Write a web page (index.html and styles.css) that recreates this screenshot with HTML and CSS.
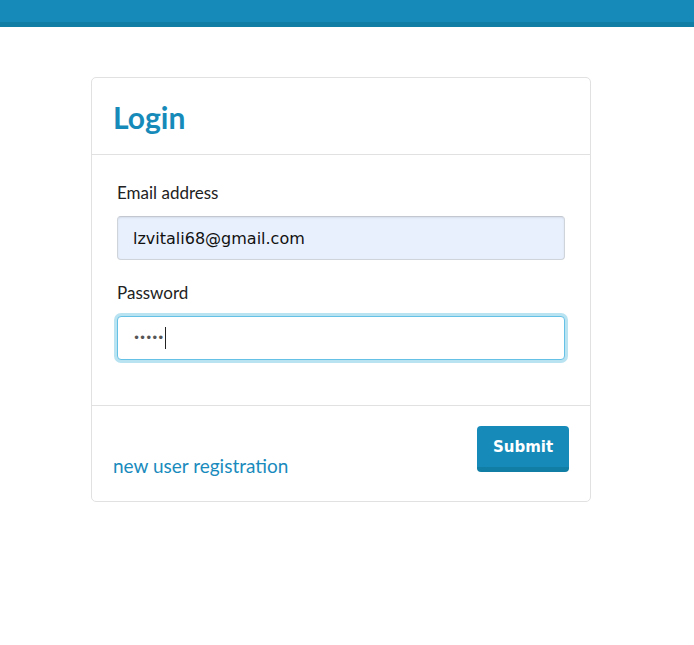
FILE: index.html
```html
<!DOCTYPE html>
<html>
<head>
<meta charset="utf-8">
<link rel="stylesheet" href="styles.css">
</head>
<body>
<div class="topbar"></div>
<main class="page">
  <div class="card">
    <div class="card-header"><h1>Login</h1></div>
    <div class="card-body">
      <label class="label">Email address</label>
      <div class="input filled">lzvitali68@gmail.com</div>
      <label class="label">Password</label>
      <div class="input focused"><span class="dots">•••••</span><span class="caret"></span></div>
    </div>
    <div class="card-footer">
      <a class="link" href="#">new user registration</a>
      <button class="btn">Submit</button>
    </div>
  </div>
</main>
</body>
</html>
```
FILE: styles.css
```css
html, body { margin: 0; padding: 0; background: #fff; }
body { font-family: "Source Sans Pro", Lato, "Open Sans", sans-serif; color: #222; }
.topbar { height: 22px; background: #168bba; border-bottom: 5px solid #117fa5; }
.page { padding: 50px 0 0 91px; }
.card { width: 498px; border: 1px solid #e1e1e1; border-radius: 5px; }
.card-header { height: 76px; border-bottom: 1px solid #e1e1e1; padding: 0 21px; display: flex; align-items: center; }
.card-header h1 { margin: 0; font-size: 30px; font-weight: 700; color: #168bba; padding-top: 2px; }
.card-body { padding: 28px 25px 45px; display: flex; flex-direction: column; }
.label { font-size: 17px; color: #222; line-height: 20px; margin-bottom: 13px; }
.input { border: 1px solid #cfd4db; border-top-color: #c3c8d0; border-radius: 4px; box-sizing: border-box; height: 44px; padding: 0 15px; display: flex; align-items: center; font-family: "Comic Sans MS", "DejaVu Sans", sans-serif; font-size: 16px; color: #111; }
.input.filled { background: #e8f0fd; margin-bottom: 23px; box-shadow: inset 0 1px 2px rgba(0,0,0,0.08); }
.input.focused { background: #fff; border: 1px solid #66c1e6; box-shadow: 0 0 0 3px #b9e3f1; }
.dots { color: #555; font-size: 12px; letter-spacing: -1px; }
.caret { display: inline-block; width: 1px; height: 22px; background: #222; margin-left: 2px; }
.card-footer { border-top: 1px solid #e1e1e1; padding: 20px 21px 24px; display: flex; justify-content: space-between; align-items: flex-start; }
.link { color: #1a8bbd; text-decoration: none; font-size: 19px; margin-top: 29px; line-height: 22px; }
.btn { width: 92px; height: 46px; background: #168bba; border: none; border-bottom: 5px solid #117fa5; border-radius: 4px; color: #fff; font-family: "Comic Sans MS", "DejaVu Sans", sans-serif; font-weight: 700; font-size: 15px; padding: 0; }
```
